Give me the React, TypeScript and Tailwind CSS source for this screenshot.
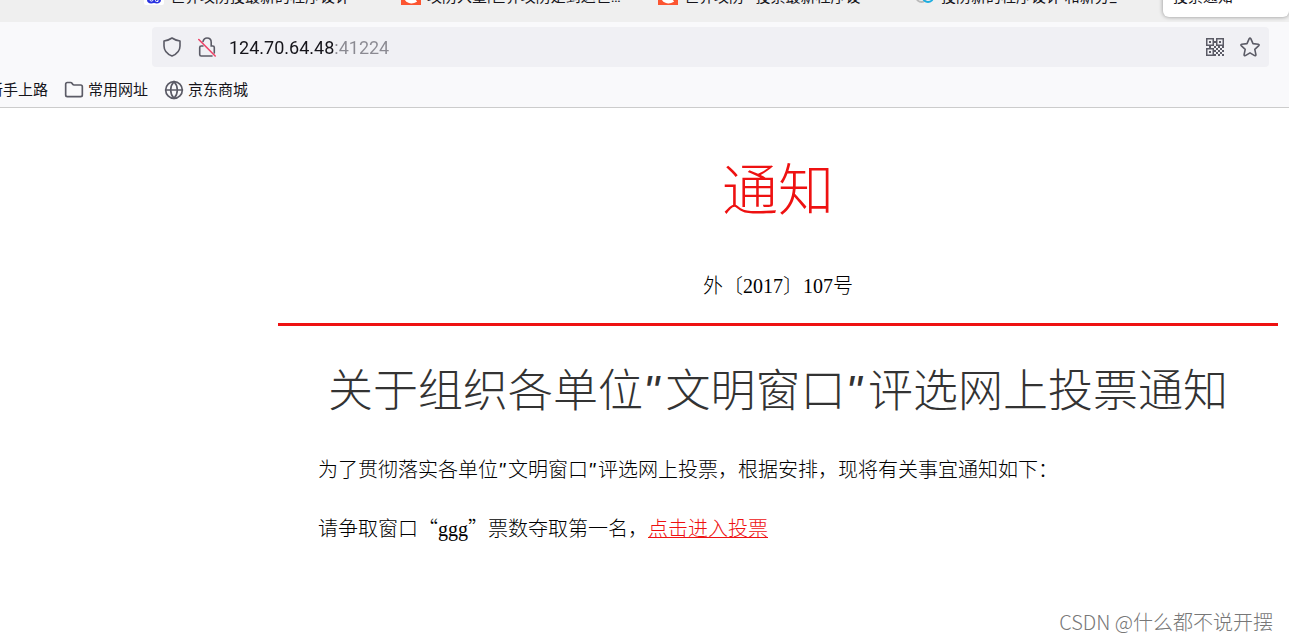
import { Folder, Globe } from "lucide-react";

const tabs = [
  { icon: "baidu", title: "世界攻防投最新的程序设计", width: "w-[257px]" },
  { icon: "csdn", title: "攻防入墨|世界攻防是到达世…", width: "w-[257px]" },
  { icon: "csdn", title: "世界攻防 - 投票最新程序设", width: "w-[257px]" },
  { icon: "cloud", title: "投防新的程序设计 和新分_", width: "w-[244px]" },
];

function TabIcon({ name }: { name: string }) {
  if (name === "baidu") {
    return (
      <svg viewBox="0 0 20 20" className="size-5 shrink-0">
        <rect width="20" height="20" rx="2" fill="#fff" />
        <path d="M10 6c-4 2-7 5-7 9 0 3 3 4 7 3 4 1 7 0 7-3 0-4-3-7-7-9z" fill="#2932e1" />
        <circle cx="7.5" cy="14.5" r="1.6" fill="none" stroke="#fff" />
        <path d="M11.5 13v2.5q0 1 1 1h1.5V13" fill="none" stroke="#fff" />
      </svg>
    );
  }
  if (name === "csdn") {
    return (
      <svg viewBox="0 0 20 20" className="size-5 shrink-0">
        <rect width="20" height="20" fill="#fc5531" />
        <path d="M15 6c-5-3-10 0-10 5s5 7 10 4" fill="none" stroke="#fff" strokeWidth="4" />
      </svg>
    );
  }
  return (
    <svg viewBox="0 0 20 20" className="size-5 shrink-0" fill="none" strokeWidth="2">
      <circle cx="6.5" cy="12" r="5" stroke="#b9b9b9" />
      <circle cx="13" cy="12" r="5" stroke="#1bade0" />
    </svg>
  );
}

function ShieldIcon() {
  return (
    <svg viewBox="0 0 18 20" className="h-5 w-[18px]" fill="none" stroke="#5b5b66" strokeWidth="1.6" strokeLinejoin="round">
      <path d="M9 1c2.400 1.700 5 2.600 8 3v5c0 4.600-3.500 8.200-8 10-4.500-1.800-8-5.400-8-10V4c3-.4 5.600-1.300 8-3z" />
    </svg>
  );
}

function InsecureIcon() {
  return (
    <svg viewBox="0 0 18 20" className="h-5 w-[18px]" fill="none" strokeWidth="1.6" strokeLinecap="round">
      <path d="M5 4.500C5.600 2.300 7 1 9 1c2.600 0 4.200 1.800 4.200 4.300V9h1.600c1 0 1.500.6 1.500 1.500V16M5 9H3.200c-.9 0-1.500.6-1.500 1.500v7c0 .9.600 1.500 1.500 1.500H14" stroke="#5b5b66" />
      <path d="M.8 2.500 17.200 19" stroke="#ef4468" />
    </svg>
  );
}

function QrIcon() {
  return (
    <svg viewBox="0 0 18 18" className="size-[18px]" fill="#5b5b66">
      {["M0 0", "M10 0", "M0 10"].map((start) => (
        <path key={start} fillRule="evenodd" d={`${start}h8v8h-8zm1.500 1.500v5h5v-5zm1.500 1.500h2v2h-2z`} />
      ))}
      <path d="M8 3h2v2H8zM3 8h2v2H3zM8 8h2v2H8zM12 8h2v2h-2zM16 8h2v2h-2zM10 10h2v2h-2zM14 10h2v2h-2zM8 12h2v2H8zM12 12h2v2h-2zM16 12h2v2h-2zM10 14h2v2h-2zM14 14h2v2h-2zM8 16h2v2H8zM12 16h2v2h-2zM16 16h2v2h-2z" />
    </svg>
  );
}

function StarIcon() {
  return (
    <svg viewBox="0 0 20 20" className="size-5" fill="none" stroke="#5b5b66" strokeWidth="1.6" strokeLinejoin="round">
      <path d="M9.200 1.600q.8-1.200 1.600 0l2.200 5 5.300.6q1.300.4.500 1.400l-4 3.700 1.100 5.400q0 1.300-1.300.9L10 15.900l-4.600 2.700q-1.300.4-1.300-.9l1.100-5.400-4-3.700q-.8-1 .5-1.400l5.300-.6z" />
    </svg>
  );
}

// straight quote in a half-width cell, as in a monospaced CJK face
function Quote() {
  return <span className="inline-block w-[0.5em] text-left font-['Liberation_Sans',sans-serif] italic">"</span>;
}

export default function App() {
  return (
    <div className="relative min-h-screen overflow-x-hidden bg-white text-black">
      <header className="border-b border-[#cccccc] bg-[#f9f9fb] font-['Roboto','Noto_Sans_CJK_SC',sans-serif] text-[#15141a]">
        <nav className="flex h-[22px] items-end overflow-hidden bg-[#efefef] pl-36 text-[15px]">
          {tabs.map((tab) => (
            <button key={tab.title} className={`flex shrink-0 items-end gap-1.5 text-left ${tab.width}`}>
              <span className="pb-[17px]">
                <TabIcon name={tab.icon} />
              </span>
              <span className="w-[190px] pb-[15px] leading-5 whitespace-nowrap">{tab.title}</span>
            </button>
          ))}
          <button className="mb-[5px] ml-1 grow rounded-md bg-white px-2.5 pb-2.5 text-left leading-5 shadow-[0_0_4px_rgba(0,0,0,0.4)]">
            投票通知
          </button>
        </nav>

        <div className="pt-[5px] pr-5 pl-[152px]">
          <div className="flex h-10 items-center rounded bg-[#f0f0f4] pr-[9px] pl-[11px]">
            <button aria-label="跟踪保护">
              <ShieldIcon />
            </button>
            <button aria-label="连接不安全" className="ml-[17px]">
              <InsecureIcon />
            </button>
            {/* host is dark, port is greyed out */}
            <input
              aria-label="地址"
              defaultValue="124.70.64.48:41224"
              className="ml-[13px] min-w-0 grow bg-[linear-gradient(to_right,#15141a_105px,#8b8a92_105px)] bg-clip-text text-[18px] text-transparent outline-none"
            />
            <button aria-label="二维码">
              <QrIcon />
            </button>
            <button aria-label="收藏" className="ml-4">
              <StarIcon />
            </button>
          </div>
        </div>

        <nav className="-ml-3 flex h-10 items-center gap-4 pt-1.5 text-[15px]">
          <a href="#start">新手上路</a>
          <a href="#common" className="flex items-center gap-1">
            <Folder className="size-5 text-[#5b5b66]" />
            常用网址
          </a>
          <a href="#jd" className="flex items-center gap-1">
            <Globe className="size-5 text-[#5b5b66]" />
            京东商城
          </a>
        </nav>
      </header>

      <main className="pt-9 pr-[11px] pl-[278px] font-['Noto_Sans_CJK_SC',sans-serif] text-xl leading-[30px] font-light">
        <h1 className="text-center text-[56px] leading-[84px] text-[#ee1111]">通知</h1>
        <p className="mt-[42px] text-center">
          外〔<span className="font-['Liberation_Serif',serif]">2017</span>〕
          <span className="font-['Liberation_Serif',serif]">107</span>号
        </p>
        <hr className="mt-[22px] border-t-3 border-[#ee1111]" />
        <h2 className="mt-8 text-center text-[45px] leading-[60px] whitespace-nowrap text-[#333333]">
          关于组织各单位<Quote />文明窗口<Quote />评选网上投票通知
        </h2>
        <div className="mt-8 space-y-7 px-10">
          <p>
            为了贯彻落实各单位<Quote />文明窗口<Quote />评选网上投票，根据安排，现将有关事宜通知如下：
          </p>
          <p>
            请争取窗口“<span className="font-['Liberation_Serif',serif]">ggg</span>”票数夺取第一名，
            <a href="#vote" className="text-[#ee1111] underline decoration-1">点击进入投票</a>
          </p>
        </div>
      </main>

      <div className="absolute right-4 bottom-1 font-['Noto_Sans_CJK_SC',sans-serif] text-xl leading-[30px] font-light text-[#777777]">
        CSDN @什么都不说开摆
      </div>
    </div>
  );
}
